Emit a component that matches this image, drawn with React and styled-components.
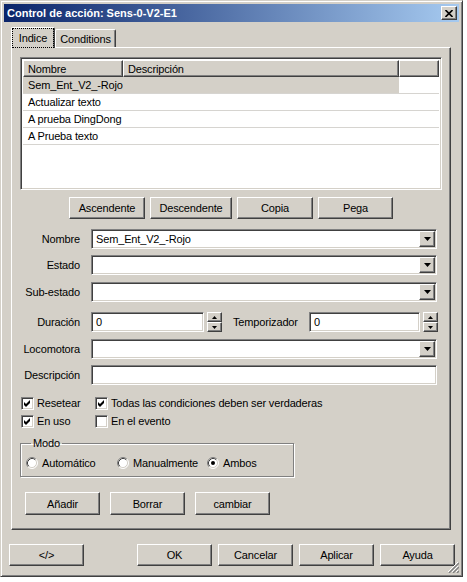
import React from 'react';
import styled, { createGlobalStyle, css } from 'styled-components';

const FACE = '#D4D0C8';

const GlobalStyle = createGlobalStyle`
  html, body { margin: 0; padding: 0; background: #fff; }
  body { font-family: "Liberation Sans", Arial, sans-serif; font-size: 11px; color: #000; letter-spacing: -0.15px; }
  * { box-sizing: border-box; }
`;

const raised = css`
  background: ${FACE};
  border: 1px solid;
  border-color: #fff #404040 #404040 #fff;
  box-shadow: inset -1px -1px 0 #808080, inset 1px 1px 0 ${FACE};
`;

const sunken = css`
  border: 1px solid;
  border-color: #808080 #fff #fff #808080;
  box-shadow: inset 1px 1px 0 #404040, inset -1px -1px 0 ${FACE};
`;

const Window = styled.div`
  position: relative;
  width: 463px;
  height: 577px;
  background: ${FACE};
  border: 1px solid;
  border-color: ${FACE} #404040 #404040 ${FACE};
  box-shadow: inset 1px 1px 0 #fff, inset -1px -1px 0 #808080;
  padding: 3px;
  display: flex;
  flex-direction: column;
`;

const TitleBar = styled.div`
  height: 18px;
  flex-shrink: 0;
  background: linear-gradient(to right, #0a246a, #a6caf0);
  display: flex;
  align-items: center;
  justify-content: space-between;
  padding: 0 2px 0 2px;
`;

const TitleText = styled.span`
  color: #fff;
  font-weight: bold;
  font-size: 11px;
  letter-spacing: 0;
  padding-left: 1px;
  white-space: nowrap;
`;

const CloseButton = styled.div`
  ${raised};
  width: 16px;
  height: 14px;
  display: flex;
  align-items: center;
  justify-content: center;
`;

const Body = styled.div`
  flex: 1;
  display: flex;
  flex-direction: column;
  padding: 5px 4px 7px 5px;
`;

const TabStrip = styled.div`
  display: flex;
  align-items: flex-end;
  height: 21px;
  padding-left: 2px;
`;

const Tab = styled.div`
  position: relative;
  background: ${FACE};
  border-left: 1px solid #fff;
  border-top: 1px solid #fff;
  border-right: 1px solid #404040;
  border-radius: 2px 2px 0 0;
  box-shadow: inset -1px 0 0 #808080;
  display: flex;
  align-items: center;
  justify-content: center;
  ${p => p.$active ? css`
    z-index: 2;
    width: 44px;
    height: 21px;
    padding: 1px 1px 1px 1px;
  ` : css`
    width: 61px;
    height: 18px;
    margin-bottom: 1px;
    padding-top: 1px;
  `}
`;

const TabLabel = styled.span`
  ${p => p.$focus && css`
    outline: 1px dotted #000;
    outline-offset: 0;
    align-self: stretch;
    flex: 1;
    display: flex;
    align-items: center;
    justify-content: center;
    padding-bottom: 1px;
  `}
`;

const Panel = styled.div`
  flex: 1;
  margin: -1px 4px 0 2px;
  background: ${FACE};
  border: 1px solid;
  border-color: #fff #404040 #404040 #fff;
  box-shadow: inset -1px -1px 0 #808080;
  padding: 1px;
  display: flex;
  flex-direction: column;
`;

const ListBox = styled.div`
  ${sunken};
  margin: 8px 7px 0 7px;
  height: 133px;
  padding: 2px;
  background: #fff;
  display: flex;
  flex-direction: column;
`;

const HeaderRow = styled.div`
  display: flex;
  height: 17px;
  flex-shrink: 0;
`;

const HeaderCell = styled.div`
  ${raised};
  width: ${p => p.$w ? `${p.$w}px` : 'auto'};
  flex: ${p => p.$w ? 'none' : 1};
  height: 17px;
  padding-left: 4px;
  display: flex;
  align-items: center;
  white-space: nowrap;
`;

const Row = styled.div`
  display: flex;
  height: 17px;
  flex-shrink: 0;
  border-bottom: 1px solid #d6d4d0;
`;

const Cell = styled.div`
  position: relative;
  width: ${p => p.$w ? `${p.$w}px` : 'auto'};
  flex: ${p => p.$w ? 'none' : 1};
  background: ${p => p.$sel ? FACE : '#fff'};
  padding-left: 5px;
  display: flex;
  align-items: center;
  white-space: nowrap;
`;

const Button = styled.div`
  ${raised};
  width: ${p => p.$w || 75}px;
  height: ${p => p.$h || 23}px;
  display: flex;
  align-items: center;
  justify-content: center;
  flex-shrink: 0;
  white-space: nowrap;
`;

const ButtonRow = styled.div`
  display: flex;
  justify-content: center;
  gap: 5px;
  margin-top: 7px;
`;

const Form = styled.div`
  margin: 10px 12px 0 0;
  display: flex;
  flex-direction: column;
`;

const FieldRow = styled.div`
  display: flex;
  align-items: center;
  height: 20px;
  margin-top: ${p => p.$mt || 0}px;
`;

const Label = styled.span`
  width: ${p => p.$w || 67}px;
  margin-right: ${p => (p.$mr ?? 11)}px;
  text-align: ${p => p.$left ? 'left' : 'right'};
  flex-shrink: 0;
  white-space: nowrap;
`;

const Field = styled.div`
  ${sunken};
  background: #fff;
  height: 20px;
  width: ${p => p.$w ? `${p.$w}px` : 'auto'};
  flex: ${p => p.$w ? 'none' : 1};
  display: flex;
  align-items: center;
  padding: 1px;
`;

const FieldText = styled.span`
  flex: 1;
  padding-left: 3px;
  white-space: nowrap;
`;

const DropButton = styled.div`
  ${raised};
  width: 16px;
  height: 16px;
  display: flex;
  align-items: center;
  justify-content: center;
`;

const Spin = styled.div`
  display: flex;
  flex-direction: column;
  width: 15px;
  height: 20px;
  margin-left: 3px;
  flex-shrink: 0;
`;

const SpinBtn = styled.div`
  ${raised};
  height: 10px;
  display: flex;
  align-items: center;
  justify-content: center;
`;

const Gap = styled.div`
  width: ${p => p.$w}px;
  flex-shrink: 0;
`;

const CheckRow = styled.div`
  display: flex;
  align-items: center;
  height: 18px;
  padding-left: 8px;
  margin-top: ${p => p.$mt || 0}px;
`;

const CheckItem = styled.div`
  display: flex;
  align-items: center;
  gap: 3px;
  width: ${p => p.$w ? `${p.$w}px` : 'auto'};
  white-space: nowrap;
`;

const CheckBoxBox = styled.div`
  ${sunken};
  width: 13px;
  height: 13px;
  background: #fff;
  flex-shrink: 0;
  display: flex;
  align-items: center;
  justify-content: center;
`;

const GroupBox = styled.fieldset`
  margin: 7px 0 0 7px;
  width: 274px;
  padding: 5px 5px 5px 5px;
  border: 1px solid #808080;
  box-shadow: inset 1px 1px 0 #fff, 1px 1px 0 #fff;
  display: flex;
`;

const Legend = styled.legend`
  padding: 0 2px;
  margin-left: 5px;
  line-height: 13px;
`;

const RadioRow = styled.div`
  display: flex;
  align-items: center;
  height: 16px;
`;

const RadioItem = styled.div`
  display: flex;
  align-items: center;
  gap: 4px;
  width: ${p => p.$w}px;
  white-space: nowrap;
`;

const ActionRow = styled.div`
  display: flex;
  gap: 10px;
  margin: 15px 0 0 12px;
`;

const BottomRow = styled.div`
  display: flex;
  justify-content: space-between;
  margin-top: 14px;
  height: 22px;
  flex-shrink: 0;
`;

const BottomGroup = styled.div`
  display: flex;
  gap: 6px;
`;

const Grip = styled.svg`
  position: absolute;
  right: 3px;
  bottom: 3px;
`;

const DownArrow = () => (
  <svg width="7" height="4" viewBox="0 0 7 4"><polygon points="0,0 7,0 3.5,4" fill="#000" /></svg>
);

const SmallArrow = ({ up }) => (
  <svg width="5" height="3" viewBox="0 0 5 3">
    <polygon points={up ? '2.5,0 5,3 0,3' : '0,0 5,0 2.5,3'} fill="#000" />
  </svg>
);

const CheckBox = ({ checked }) => (
  <CheckBoxBox>
    {checked && (
      <svg width="9" height="9" viewBox="0 0 9 9">
        <polygon points="1,3 3,5 7,1 7,4 3,8 1,6" fill="#000" />
      </svg>
    )}
  </CheckBoxBox>
);

const Radio = ({ checked }) => (
  <svg width="12" height="12" viewBox="0 0 12 12">
    <circle cx="6" cy="6" r="5" fill="#fff" />
    <path d="M2.11 9.89 A5.5 5.5 0 0 1 9.89 2.11" fill="none" stroke="#808080" />
    <path d="M9.89 2.11 A5.5 5.5 0 0 1 2.11 9.89" fill="none" stroke="#fff" />
    <path d="M2.82 9.18 A4.5 4.5 0 0 1 9.18 2.82" fill="none" stroke="#404040" />
    <path d="M9.18 2.82 A4.5 4.5 0 0 1 2.82 9.18" fill="none" stroke={FACE} />
    {checked && <circle cx="6" cy="6" r="2" fill="#000" />}
  </svg>
);

const Combo = ({ value }) => (
  <Field>
    <FieldText>{value}</FieldText>
    <DropButton><DownArrow /></DropButton>
  </Field>
);

const SpinBox = ({ w, value }) => (
  <>
    <Field $w={w}><FieldText>{value}</FieldText></Field>
    <Spin>
      <SpinBtn><SmallArrow up /></SpinBtn>
      <SpinBtn><SmallArrow /></SpinBtn>
    </Spin>
  </>
);

const rows = [
  { name: 'Sem_Ent_V2_-Rojo', sel: true },
  { name: 'Actualizar texto' },
  { name: 'A prueba DingDong' },
  { name: 'A Prueba texto' },
];

export default function App() {
  return (
    <>
      <GlobalStyle />
      <Window>
        <TitleBar>
          <TitleText>Control de acción: Sens-0-V2-E1</TitleText>
          <CloseButton>
            <svg width="8" height="7" viewBox="0 0 8 7">
              <path d="M0.5 0 L7.5 7 M7.5 0 L0.5 7" stroke="#000" strokeWidth="1.6" />
            </svg>
          </CloseButton>
        </TitleBar>
        <Body>
          <TabStrip>
            <Tab $active><TabLabel $focus>Indice</TabLabel></Tab>
            <Tab><TabLabel>Conditions</TabLabel></Tab>
          </TabStrip>
          <Panel>
            <ListBox>
              <HeaderRow>
                <HeaderCell $w={100}>Nombre</HeaderCell>
                <HeaderCell $w={276}>Descripción</HeaderCell>
                <HeaderCell />
              </HeaderRow>
              {rows.map(r => (
                <Row key={r.name}>
                  <Cell $w={100} $sel={r.sel}>{r.name}</Cell>
                  <Cell $w={276} $sel={r.sel} />
                  <Cell />
                </Row>
              ))}
            </ListBox>
            <ButtonRow>
              <Button $w={76} $h={22}>Ascendente</Button>
              <Button $w={82} $h={22}>Descendente</Button>
              <Button $w={76} $h={22}>Copia</Button>
              <Button $w={75} $h={22}>Pega</Button>
            </ButtonRow>
            <Form>
              <FieldRow>
                <Label>Nombre</Label>
                <Combo value="Sem_Ent_V2_-Rojo" />
              </FieldRow>
              <FieldRow $mt={6}>
                <Label>Estado</Label>
                <Combo value="" />
              </FieldRow>
              <FieldRow $mt={7}>
                <Label>Sub-estado</Label>
                <Combo value="" />
              </FieldRow>
              <FieldRow $mt={10}>
                <Label>Duración</Label>
                <SpinBox w={113} value="0" />
                <Gap $w={11} />
                <Label $w={76} $mr={0} $left>Temporizador</Label>
                <SpinBox w={111} value="0" />
              </FieldRow>
              <FieldRow $mt={7}>
                <Label>Locomotora</Label>
                <Combo value="" />
              </FieldRow>
              <FieldRow $mt={6}>
                <Label>Descripción</Label>
                <Field><FieldText /></Field>
              </FieldRow>
            </Form>
            <CheckRow $mt={9}>
              <CheckItem $w={74}><CheckBox checked />Resetear</CheckItem>
              <CheckItem><CheckBox checked />Todas las condiciones deben ser verdaderas</CheckItem>
            </CheckRow>
            <CheckRow>
              <CheckItem $w={74}><CheckBox checked />En uso</CheckItem>
              <CheckItem><CheckBox />En el evento</CheckItem>
            </CheckRow>
            <GroupBox>
              <Legend>Modo</Legend>
              <RadioRow>
                <RadioItem $w={91}><Radio />Automático</RadioItem>
                <RadioItem $w={90}><Radio />Manualmente</RadioItem>
                <RadioItem $w={70}><Radio checked />Ambos</RadioItem>
              </RadioRow>
            </GroupBox>
            <ActionRow>
              <Button>Añadir</Button>
              <Button>Borrar</Button>
              <Button>cambiar</Button>
            </ActionRow>
          </Panel>
          <BottomRow>
            <Button $h={22}>&lt;/&gt;</Button>
            <BottomGroup>
              <Button $h={22}>OK</Button>
              <Button $h={22}>Cancelar</Button>
              <Button $h={22}>Aplicar</Button>
              <Button $h={22}>Ayuda</Button>
            </BottomGroup>
          </BottomRow>
        </Body>
        <Grip width="12" height="12" viewBox="0 0 12 12">
          <path d="M11 1 L1 11 M11 5 L5 11 M11 9 L9 11" stroke="#fff" />
          <path d="M12 2 L2 12 M12 6 L6 12 M12 10 L10 12" stroke="#808080" strokeWidth="1.4" />
        </Grip>
      </Window>
    </>
  );
}
